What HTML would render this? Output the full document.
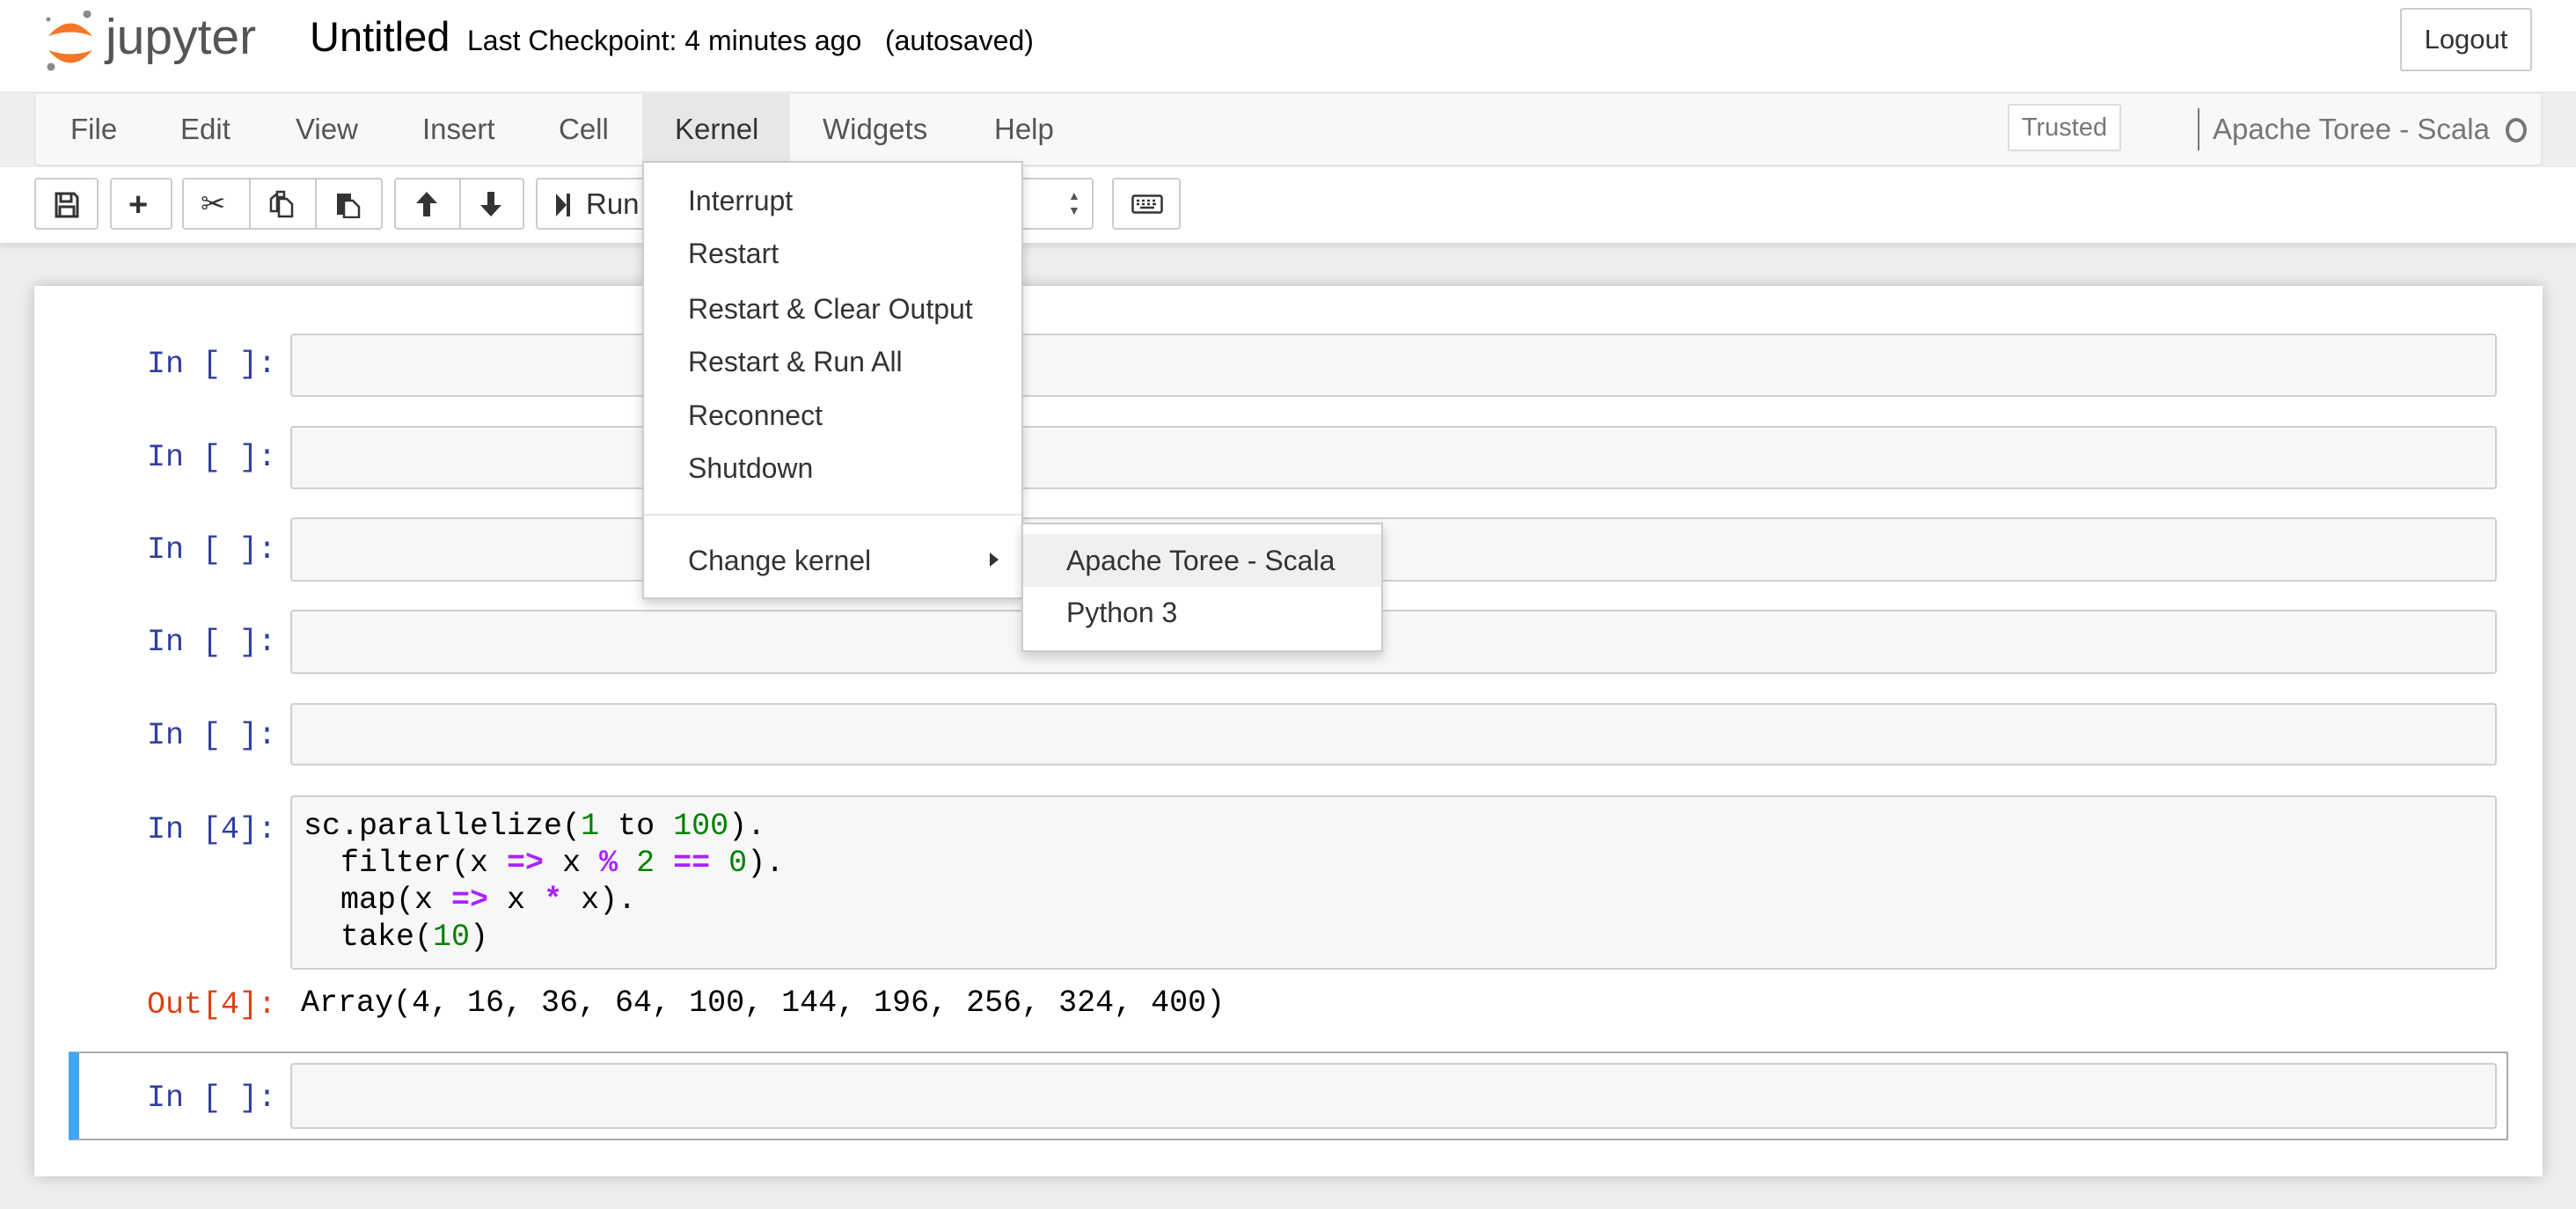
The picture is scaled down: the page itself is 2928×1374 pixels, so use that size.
<!DOCTYPE html>
<html><head><meta charset="utf-8"><style>
*{box-sizing:border-box;margin:0;padding:0}
body{width:2928px;height:1374px;background:#eeeeee;font-family:"Liberation Sans",sans-serif;position:relative;overflow:hidden}
.a{position:absolute}
.mono{font-family:"Liberation Mono",monospace}
.btn{position:absolute;top:202px;height:59px;border:2px solid #ccc;border-radius:4px;background:#fff}
.mi{position:absolute;font-size:33px;color:#555;top:128px}
.prompt{position:absolute;right:2614px;font-size:35px;color:#303f9f;font-family:"Liberation Mono",monospace;text-align:right;white-space:pre}
.inbox{position:absolute;left:330px;width:2508px;background:#f7f7f7;border:2px solid #cfcfcf;border-radius:4px}
.dd{position:absolute;font-size:32px;color:#333}
.g{color:#008000}.p{color:#aa22ff;font-weight:bold}
</style></head><body>
<!-- header -->
<div class="a" style="left:0;top:0;width:2928px;height:106px;background:#fff;border-bottom:2px solid #e7e7e7"></div>
<svg class="a" style="left:50px;top:12px" width="60" height="70" viewBox="0 0 60 70">
<path d="M5 29 Q30 0 55 29 Q30 20 5 29Z" fill="#f37726"/>
<path d="M5 45 Q30 74 55 45 Q30 54 5 45Z" fill="#f37726"/>
<circle cx="49" cy="4" r="4.5" fill="#8a8a8a"/><circle cx="5" cy="10" r="2.5" fill="#8a8a8a"/><circle cx="8" cy="64" r="4.5" fill="#8a8a8a"/>
</svg>
<div class="a" style="left:120px;top:14px;font-size:57px;line-height:1;color:#555">jupyter</div>
<div class="a" style="left:352px;top:14px;font-size:47px;color:#000">Untitled</div>
<div class="a" style="left:531px;top:28px;font-size:32px;color:#000;white-space:pre">Last Checkpoint: 4 minutes ago   (autosaved)</div>
<div class="a" style="left:2728px;top:9px;width:150px;height:72px;border:2px solid #ccc;border-radius:3px;background:#fff;font-size:31px;color:#333;text-align:center;line-height:68px">Logout</div>
<!-- menubar -->
<div class="a" style="left:39px;top:107px;width:2851px;height:82px;background:#f8f8f8;border:2px solid #e7e7e7;border-top:none;border-radius:0 0 5px 5px"></div>
<div class="a" style="left:730px;top:107px;width:168px;height:80px;background:#e7e7e7"></div>
<div class="mi" style="left:80px">File</div><div class="mi" style="left:205px">Edit</div><div class="mi" style="left:336px">View</div><div class="mi" style="left:480px">Insert</div><div class="mi" style="left:635px">Cell</div><div class="mi" style="left:767px;color:#333">Kernel</div><div class="mi" style="left:935px">Widgets</div><div class="mi" style="left:1130px">Help</div>
<div class="a" style="left:2282px;top:118px;width:129px;height:54px;border:2px solid #ddd;border-radius:3px;background:#fff;font-size:29px;color:#777;text-align:center;line-height:50px">Trusted</div>
<div class="a" style="left:2498px;top:123px;width:2px;height:48px;background:#777"></div>
<div class="a" style="left:2515px;top:128px;font-size:33px;color:#777">Apache Toree - Scala</div>
<div class="a" style="left:2848px;top:134px;width:24px;height:28px;border:4px solid #777;border-radius:50%"></div>
<!-- toolbar -->
<div class="a" style="left:0;top:190px;width:2928px;height:86px;background:#fff;box-shadow:0 4px 8px rgba(0,0,0,.1)"></div>
<div class="btn" style="left:39px;width:73px"></div>
<svg class="a" style="left:62px;top:218px" width="28" height="30" viewBox="0 0 28 30"><path d="M2 2h20l4 4v22H2z M7 2v9h12V2 M6 17h16v11H6z" fill="none" stroke="#333" stroke-width="3"/></svg>
<div class="btn" style="left:125px;width:71px"></div>
<div class="a" style="left:146px;top:220px;font-size:38px;font-weight:bold;color:#333;line-height:26px">+</div>
<div class="btn" style="left:207px;width:228px"></div>
<div class="a" style="left:283px;top:202px;width:2px;height:59px;background:#ccc"></div>
<div class="a" style="left:358px;top:202px;width:2px;height:59px;background:#ccc"></div>
<div class="a" style="left:228px;top:212px;font-size:34px;color:#333">✂</div>
<svg class="a" style="left:305px;top:216px" width="30" height="32" viewBox="0 0 30 32"><path d="M10 2h8v6h-8z M3 10l7-6v20H3z M12 10h9l6 6v14H12z" fill="none" stroke="#333" stroke-width="2.5"/></svg>
<svg class="a" style="left:381px;top:216px" width="30" height="32" viewBox="0 0 30 32"><path d="M2 4h16v24H2z" fill="#333"/><path d="M10 12h10l7 7v12H10z" fill="#fff" stroke="#333" stroke-width="2.5"/></svg>
<div class="btn" style="left:448px;width:148px"></div>
<div class="a" style="left:522px;top:202px;width:2px;height:59px;background:#ccc"></div>
<svg class="a" style="left:470px;top:216px" width="30" height="32" viewBox="0 0 30 32"><path d="M15 2L3 15h8v15h8V15h8z" fill="#333"/></svg>
<svg class="a" style="left:543px;top:216px" width="30" height="32" viewBox="0 0 30 32"><path d="M15 30L3 17h8V2h8v15h8z" fill="#333"/></svg>
<div class="btn" style="left:609px;width:634px"></div>
<svg class="a" style="left:630px;top:218px" width="20" height="30" viewBox="0 0 20 30"><path d="M2 2l12 13L2 28z" fill="#333"/><rect x="14" y="2" width="4" height="26" fill="#333"/></svg>
<div class="a" style="left:666px;top:213px;font-size:33px;color:#333">Run</div>
<div class="a" style="left:1214px;top:214px;font-size:14px;color:#555;line-height:17px">▲<br>▼</div>
<div class="btn" style="left:1264px;width:78px"></div>
<svg class="a" style="left:1286px;top:221px" width="36" height="22" viewBox="0 0 36 22"><rect x="1.5" y="1.5" width="33" height="19" rx="2" fill="none" stroke="#333" stroke-width="2.5"/><path d="M6 7h3M12 7h3M18 7h3M24 7h3M6 11h3M12 11h3M18 11h3M24 11h4M10 15h16" stroke="#333" stroke-width="2.5"/></svg>
<!-- notebook -->
<div class="a" style="left:39px;top:325px;width:2851px;height:1012px;background:#fff;box-shadow:0 0 16px rgba(0,0,0,.22)"></div>
<div class="prompt" style="top:394px">In [ ]:</div><div class="inbox" style="top:379px;height:72px"></div>
<div class="prompt" style="top:500px">In [ ]:</div><div class="inbox" style="top:484px;height:72px"></div>
<div class="prompt" style="top:605px">In [ ]:</div><div class="inbox" style="top:588px;height:73px"></div>
<div class="prompt" style="top:710px">In [ ]:</div><div class="inbox" style="top:693px;height:73px"></div>
<div class="prompt" style="top:816px">In [ ]:</div><div class="inbox" style="top:799px;height:71px"></div>
<div class="prompt" style="top:923px">In [4]:</div>
<div class="inbox" style="top:904px;height:198px"></div>
<div class="a mono" style="left:345px;top:918px;font-size:35px;line-height:42px;color:#000;white-space:pre">sc.parallelize(<span class="g">1</span> to <span class="g">100</span>).
  filter(x <span class="p">=&gt;</span> x <span class="p">%</span> <span class="g">2</span> <span class="p">==</span> <span class="g">0</span>).
  map(x <span class="p">=&gt;</span> x <span class="p">*</span> x).
  take(<span class="g">10</span>)</div>
<div class="prompt" style="top:1122px;color:#d84315">Out[4]:</div>
<div class="a mono" style="left:342px;top:1120px;font-size:35px;color:#000;white-space:pre">Array(4, 16, 36, 64, 100, 144, 196, 256, 324, 400)</div>
<div class="a" style="left:78px;top:1195px;width:2773px;height:101px;border:2px solid #ababab;border-left:12px solid #42a5f5;border-radius:2px"></div>
<div class="prompt" style="top:1228px">In [ ]:</div><div class="inbox" style="top:1208px;height:75px"></div>
<!-- kernel dropdown -->
<div class="a" style="left:730px;top:183px;width:433px;height:498px;background:#fff;border:2px solid #ccc;box-shadow:0 6px 12px rgba(0,0,0,.18)"></div>
<div class="dd" style="left:782px;top:210px">Interrupt</div>
<div class="dd" style="left:782px;top:270px">Restart</div>
<div class="dd" style="left:782px;top:333px">Restart &amp; Clear Output</div>
<div class="dd" style="left:782px;top:393px">Restart &amp; Run All</div>
<div class="dd" style="left:782px;top:454px">Reconnect</div>
<div class="dd" style="left:782px;top:514px">Shutdown</div>
<div class="a" style="left:732px;top:584px;width:429px;height:2px;background:#e5e5e5"></div>
<div class="dd" style="left:782px;top:619px">Change kernel</div>
<svg class="a" style="left:1124px;top:626px" width="12" height="20" viewBox="0 0 12 20"><path d="M1 2l10 8-10 8z" fill="#333"/></svg>
<div class="a" style="left:1161px;top:594px;width:411px;height:147px;background:#fff;border:2px solid #ccc;box-shadow:0 6px 12px rgba(0,0,0,.18)"></div>
<div class="a" style="left:1163px;top:607px;width:407px;height:60px;background:#f0f0f0"></div>
<div class="dd" style="left:1212px;top:619px">Apache Toree - Scala</div>
<div class="dd" style="left:1212px;top:678px">Python 3</div>
</body></html>
